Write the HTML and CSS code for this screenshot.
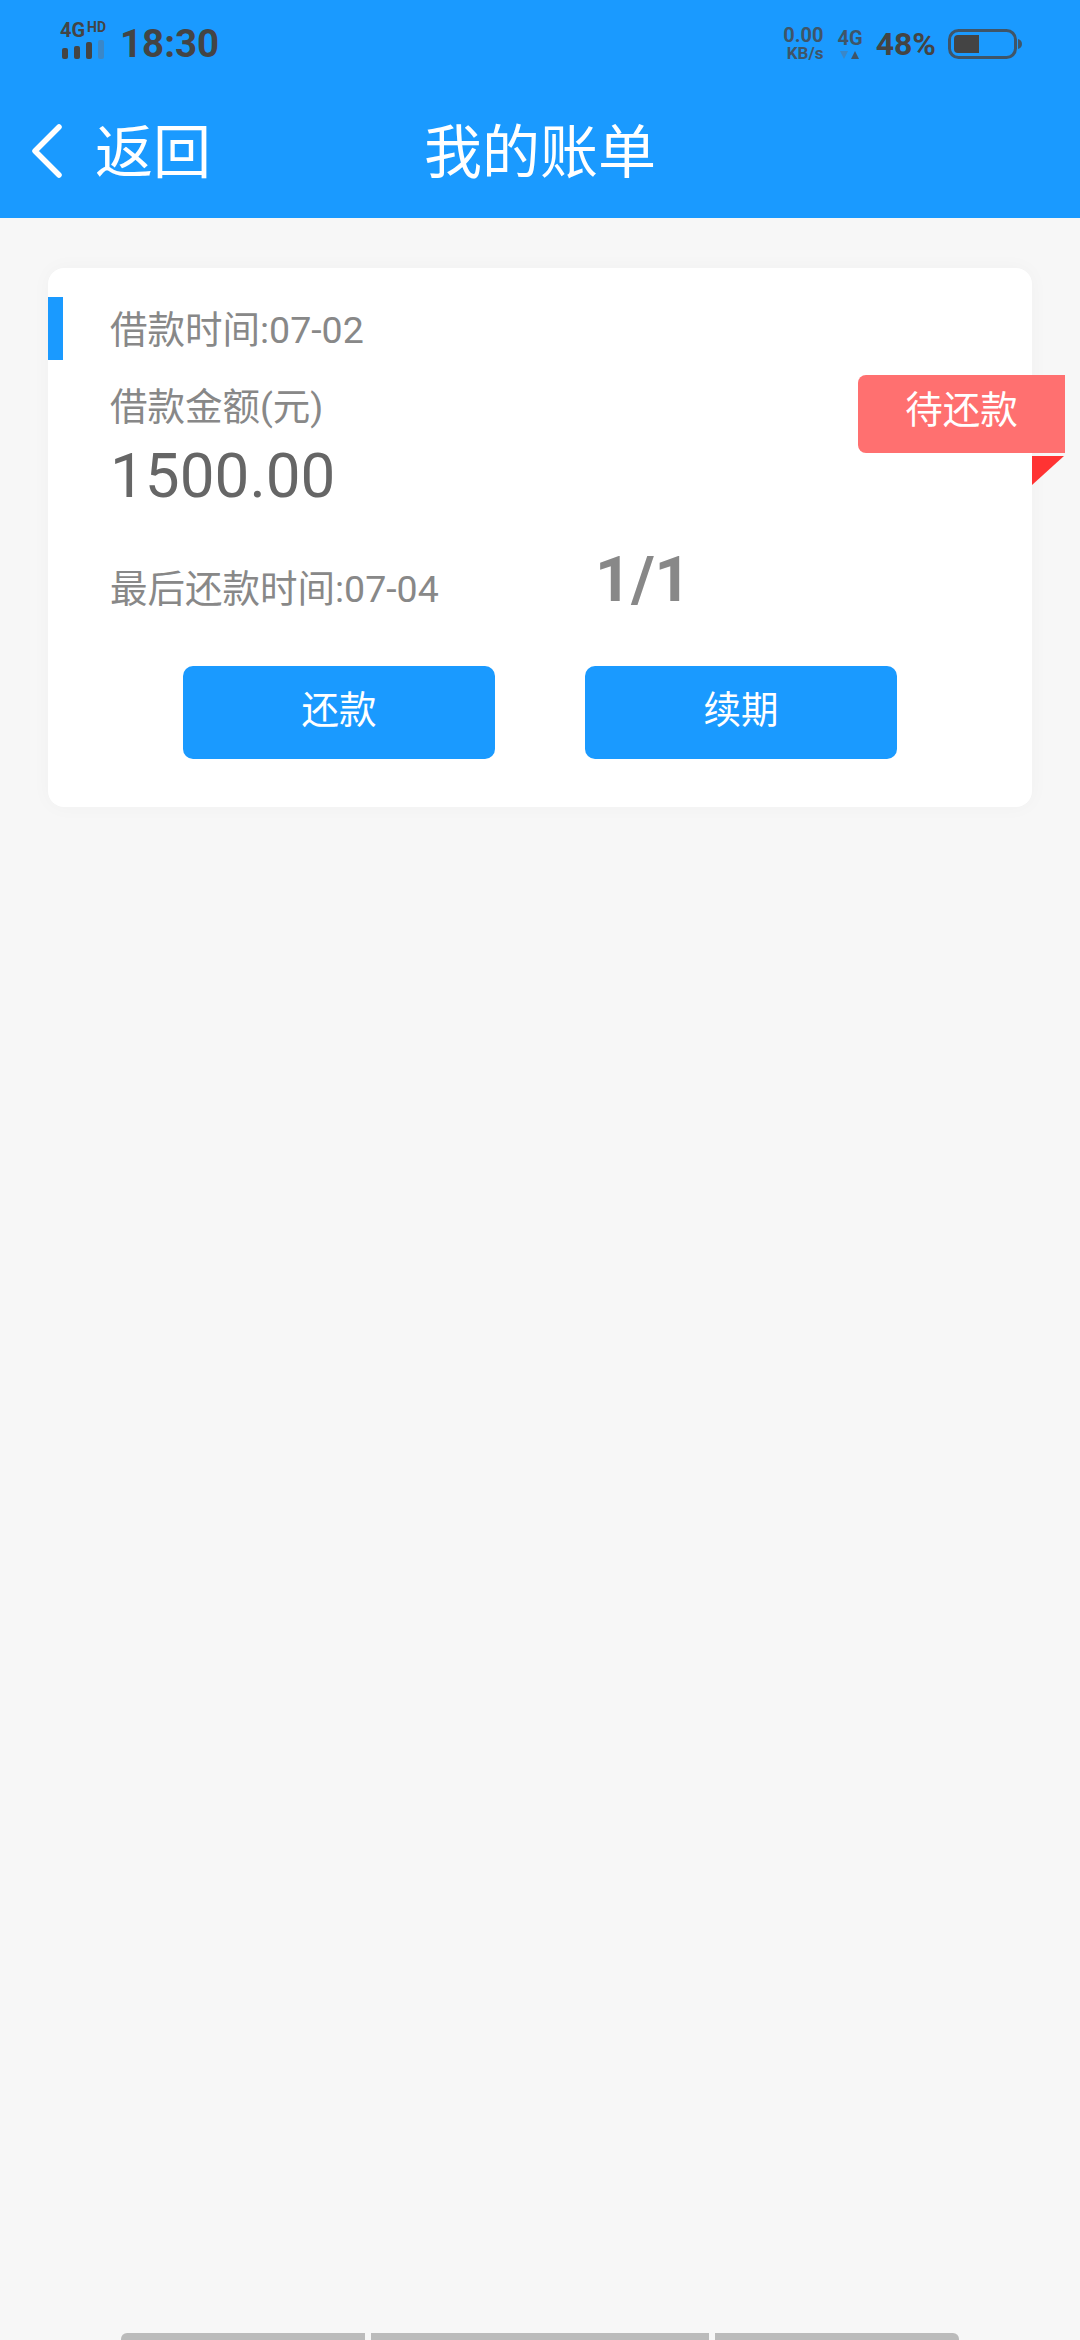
FILE: index.html
```html
<!DOCTYPE html>
<html lang="en">
<head>
    <meta charset="UTF-8">
    <meta name="viewport" content="width=device-width, initial-scale=1.0">
    <title>我的账单</title>
    <link rel="stylesheet" href="styles.css">
</head>
<body>
    <div class="top">
        <div class="statusbar">
            <div class="status-left">
                <div class="signal">
                    <div class="signal-text"><span class="net">4G</span><span class="hd">HD</span></div>
                    <svg class="bars" width="44" height="20" viewBox="0 0 44 20">
                        <rect x="2" y="9" width="6" height="11" rx="2" fill="#444"/>
                        <rect x="14" y="7" width="6" height="13" rx="2" fill="#444"/>
                        <rect x="26" y="3" width="6" height="17" rx="2" fill="#444"/>
                        <rect x="38" y="1" width="6" height="19" rx="2" fill="#3a87c8"/>
                    </svg>
                </div>
                <div class="time">18:30</div>
            </div>
            <div class="status-right">
                <div class="speed">
                    <span class="speed-num">0.00</span>
                    <span class="speed-unit">KB/s</span>
                </div>
                <div class="net-type">
                    <span class="net-label">4G</span>
                    <svg width="20" height="9" viewBox="0 0 20 9">
                        <polygon points="0,0 8,0 4,8" fill="#3a87c8"/>
                        <polygon points="11,8 19,8 15,0" fill="#3f5568"/>
                    </svg>
                </div>
                <div class="percent">48%</div>
                <svg class="battery" width="74" height="30" viewBox="0 0 74 30">
                    <rect x="1.5" y="1.5" width="66" height="27" rx="9" fill="none" stroke="#3f5568" stroke-width="3"/>
                    <path d="M6 10a4 4 0 0 1 4-4h21v18H10a4 4 0 0 1-4-4z" fill="#444"/>
                    <path d="M70 10c2.500.6 4 2.500 4 5s-1.500 4.400-4 5z" fill="#3f5568"/>
                </svg>
            </div>
        </div>
        <div class="navbar">
            <div class="back">
                <svg width="36" height="56" viewBox="0 0 36 56">
                    <path d="M31 4 L7 28 L31 52" fill="none" stroke="#fff" stroke-width="5.500" stroke-linecap="round" stroke-linejoin="round"/>
                </svg>
                <span>返回</span>
            </div>
            <div class="title">我的账单</div>
        </div>
    </div>

    <div class="main">
        <div class="card">
            <div class="card-mark"></div>
            <div class="badge">待还款</div>
            <div class="badge-fold"></div>
            <div class="loan-date">借款时间:07-02</div>
            <div class="amount-label">借款金额(元)</div>
            <div class="amount">1500.00</div>
            <div class="due-row">
                <div class="due-date">最后还款时间:07-04</div>
                <div class="period">1/1</div>
            </div>
            <div class="actions">
                <button class="btn">还款</button>
                <button class="btn">续期</button>
            </div>
        </div>
    </div>

    <div class="bottom-tabs">
        <div class="tab tab-first"></div>
        <div class="tab tab-mid"></div>
        <div class="tab tab-last"></div>
    </div>
</body>
</html>
```

FILE: styles.css
```css
* {
    box-sizing: border-box;
}
html, body {
    height: 100%;
}
body {
    margin: 0;
    background: #f7f7f7;
    font-family: Roboto, "Noto Sans CJK SC", sans-serif;
    display: flex;
    flex-direction: column;
    overflow: hidden;
}
.top {
    background: #1a9aff;
    height: 218px;
    flex-shrink: 0;
}
.statusbar {
    height: 88px;
    display: flex;
    justify-content: space-between;
    align-items: center;
    padding: 0 58px 0 60px;
    color: #444;
    font-weight: 700;
}
.status-left, .status-right {
    display: flex;
    align-items: center;
}
.signal {
    width: 46px;
    margin-right: 14px;
    margin-bottom: 8px;
}
.signal-text {
    display: flex;
    align-items: flex-start;
    height: 18px;
    line-height: 18px;
    white-space: nowrap;
}
.net {
    font-size: 20px;
}
.hd {
    font-size: 14px;
    line-height: 12px;
    margin-left: 2px;
}
.bars {
    display: block;
}
.time {
    font-size: 38.500px;
    line-height: 44px;
}
.speed {
    display: flex;
    flex-direction: column;
    align-items: flex-end;
    color: #3f5568;
    margin-right: 14px;
}
.speed-num {
    font-size: 20px;
    line-height: 19px;
}
.speed-unit {
    font-size: 17px;
    line-height: 17px;
}
.net-type {
    display: flex;
    flex-direction: column;
    align-items: center;
    color: #3f5568;
    margin-right: 13px;
}
.net-label {
    font-size: 20px;
    line-height: 20px;
}
.net-type svg {
    display: block;
    margin-top: 3px;
}
.percent {
    font-size: 32px;
    line-height: 36px;
    margin-right: 12px;
}
.navbar {
    position: relative;
    height: 130px;
    color: #fff;
    font-size: 58px;
    line-height: 130px;
    display: flex;
    align-items: flex-start;
    justify-content: center;
}
.back {
    position: absolute;
    left: 28px;
    top: 0;
    height: 120px;
    display: flex;
    align-items: center;
    gap: 31px;
}
.back span {
    margin-top: 10px;
}
.back svg {
    display: block;
    margin-top: 6px;
}
.main {
    flex: 1;
    padding: 50px 48px 0;
}
.card {
    position: relative;
    background: #fff;
    border-radius: 16px;
    height: 539px;
    padding: 41px 0 0 62px;
    box-shadow: 0 0 20px rgba(0, 0, 0, 0.03);
    color: #888;
    font-size: 37.500px;
}
.card-mark {
    position: absolute;
    left: 0;
    top: 29px;
    width: 15px;
    height: 63px;
    background: #1a9aff;
}
.badge {
    position: absolute;
    right: -33px;
    top: 107px;
    width: 207px;
    height: 78px;
    background: #ff7070;
    color: #fff;
    border-radius: 8px 0 0 8px;
    font-size: 37.500px;
    line-height: 70px;
    text-align: center;
}
.badge-fold {
    position: absolute;
    left: 984px;
    top: 188px;
    width: 0;
    height: 0;
    border-top: 29px solid #ff3333;
    border-right: 32px solid transparent;
}
.loan-date {
    line-height: 42px;
}
.amount-label {
    line-height: 42px;
    margin-top: 35px;
}
.amount {
    font-size: 62px;
    line-height: 76px;
    color: #666;
    margin-top: 10px;
}
.due-row {
    position: relative;
    height: 68px;
    margin-top: 16px;
}
.due-date {
    width: 485px;
    line-height: 46px;
    padding-top: 36px;
}
.period {
    position: absolute;
    left: 485px;
    top: 12px;
    font-size: 63px;
    font-weight: 700;
    line-height: 76px;
}
.actions {
    position: absolute;
    left: 135px;
    top: 398px;
    display: flex;
    gap: 90px;
}
.btn {
    width: 312px;
    height: 93px;
    border: none;
    padding: 0 0 12px;
    background: #1a9aff;
    color: #fff;
    border-radius: 10px;
    font-family: inherit;
    font-size: 37.500px;
}
.bottom-tabs {
    height: 7px;
    flex-shrink: 0;
    display: flex;
    gap: 6px;
    padding: 0 121px;
}
.tab {
    background: #bbb;
}
.tab-first {
    width: 244px;
    border-radius: 6px 0 0 0;
}
.tab-mid {
    width: 338px;
}
.tab-last {
    width: 244px;
    border-radius: 0 6px 0 0;
}
```
